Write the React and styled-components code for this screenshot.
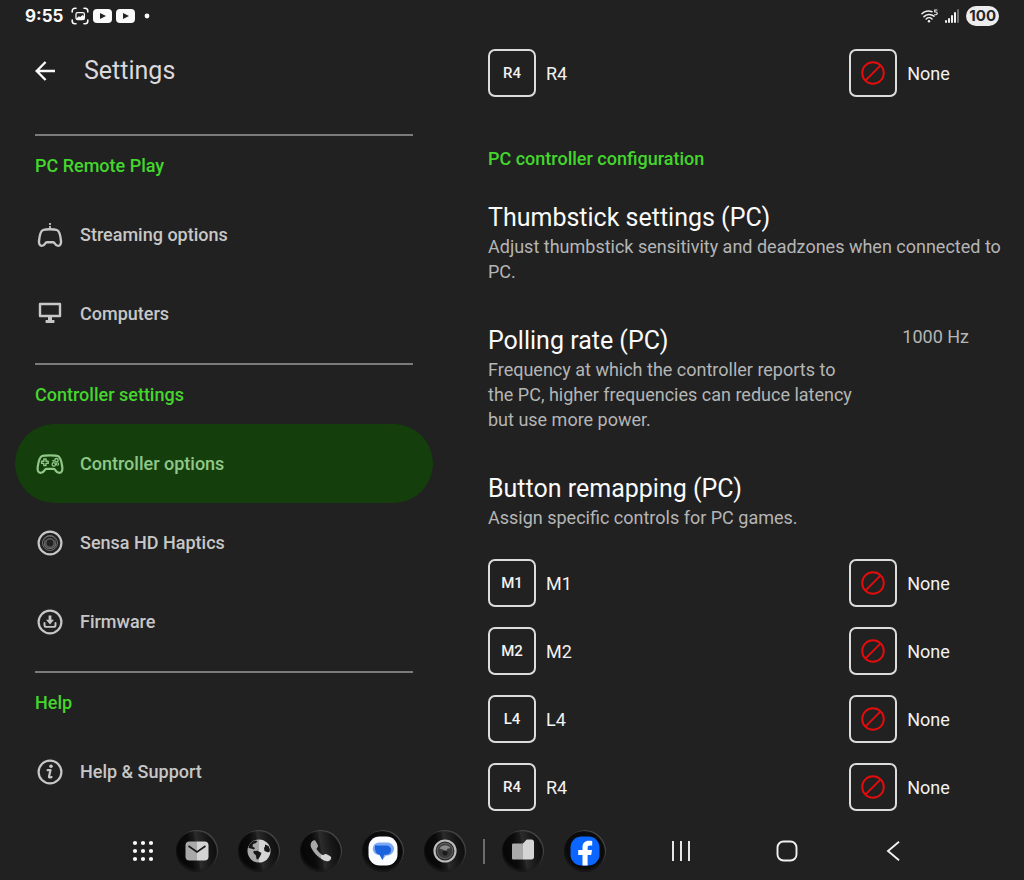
import React from 'react';
import styled, {createGlobalStyle} from 'styled-components';

const GlobalStyle = createGlobalStyle`
	*{
		box-sizing:border-box;
	}
	body{
		margin:0;
		background:#212121;
		color:#f2f2f2;
		font-family:Roboto, "Noto Sans", sans-serif;
	}
	h1, h2, h3, p, ul{
		margin:0;
		padding:0;
		font-weight:400;
	}
	ul{
		list-style:none;
	}
	button{
		padding:0;
		border:0;
		background:none;
		color:inherit;
		font:inherit;
		text-align:left;
		cursor:pointer;
	}
	a{
		color:inherit;
		text-decoration:none;
	}
	svg{
		display:block;
		flex:none;
	}
`;

//*** status bar ***//

const StatusWrapper = styled.header`
	display:flex;
	justify-content:space-between;
	align-items:center;
	height:31px;
	padding:0 25px;
	font-family:Inter, Roboto, sans-serif;
	color:#fafafa;
`;

const StatusGroup = styled.div`
	display:flex;
	align-items:center;
	gap:${props => props.$gap}px;
`;

const Clock = styled.time`
	margin-right:4px;
	font-size:17px;
	font-weight:700;
`;

const Battery = styled.span`
	height:20px;
	padding:0 3px;
	border-radius:10px;
	background:#ededed;
	color:#262626;
	font-size:15px;
	font-weight:700;
	line-height:20px;
`;

function VideoIcon() {
	return (
		<svg width="19" height="14" viewBox="0 0 19 14">
			<rect width="19" height="14" rx="4" fill="#fafafa" />
			<path d="M7 4v6l6-3z" fill="#212121" />
		</svg>
	);
}

function StatusBar() {
	return (
		<StatusWrapper>
			<StatusGroup $gap={4}>
				<Clock>9:55</Clock>
				<svg width="18" height="18" viewBox="0 0 18 18" fill="none" stroke="#fafafa" strokeWidth="1.6" strokeLinecap="round">
					<path d="M1.2 5V4a2.8 2.8 0 0 1 2.8-2.8h1M13 1.2h1A2.8 2.8 0 0 1 16.8 4v1M16.8 13v1a2.8 2.8 0 0 1-2.8 2.8h-1M5 16.8H4A2.8 2.8 0 0 1 1.2 14v-1" />
					<rect x="5" y="5.6" width="8.4" height="7" rx="1.6" strokeWidth="1.3" />
					<path d="M5.4 11.4l2.4-2.2 1.4.8 2.4-2 1.6 1.4v3H5.6z" fill="#fafafa" stroke="none" />
				</svg>
				<VideoIcon />
				<VideoIcon />
				<svg width="16" height="6" viewBox="0 0 16 6">
					<circle cx="8" cy="3" r="2.4" fill="#fafafa" />
				</svg>
			</StatusGroup>
			<StatusGroup $gap={7}>
				<svg width="17" height="14" viewBox="0 0 17 14" fill="none" stroke="#f0f0f0" strokeWidth="1.5" strokeLinecap="round">
					<path d="M1 4.8C3.2 2.4 7.4 1.2 11 2.8M3 7.6c2.6-2.6 7-2.8 10-.4M5.200 10c1.600-1.600 4.200-1.600 5.800 0" />
					<circle cx="8" cy="12.200" r="1.200" fill="#f0f0f0" stroke="none" />
					<path d="M16 1h-2.300v2h1.200a1.300 1.300 0 0 1 0 2.700h-1.400" strokeWidth="1.100" />
				</svg>
				<svg width="14" height="14" viewBox="0 0 14 14" fill="#f0f0f0">
					<rect x="0" y="11" width="2" height="3" rx="1" />
					<rect x="3" y="9" width="2" height="5" rx="1" />
					<rect x="6" y="6" width="2" height="8" rx="1" />
					<rect x="9" y="3" width="2" height="11" rx="1" />
					<rect x="12" y="0" width="2" height="14" rx="1" fill="#6d6d6d" />
				</svg>
				<Battery>100</Battery>
			</StatusGroup>
		</StatusWrapper>
	);
}

//*** side menu icons, all 30x30 ***//

function MenuIcon({children}) {
	return (
		<svg width="30" height="30" viewBox="0 0 30 30" fill="none" stroke="currentColor" strokeWidth="2.2" strokeLinecap="round" strokeLinejoin="round">
			{children}
		</svg>
	);
}

const menuIcons = {
	streaming: (
		<MenuIcon>
			<path d="M15 9.200c-3 0-5.400.2-6.900.8C5.600 11 4.400 16.500 4 21.200c-.2 2.600.7 4.700 2.900 4.700 1.600 0 2.400-.8 3.100-2.100.6-1.100 1.100-1.600 2-1.600h6c.9 0 1.400.5 2 1.600.7 1.300 1.500 2.100 3.100 2.100 2.200 0 3.100-2.100 2.900-4.700-.4-4.700-1.600-10.200-4.100-11.200-1.500-.6-3.900-.8-6.900-.8z" strokeWidth="2.400" />
			<rect x="14.100" y="3" width="1.800" height="2" fill="currentColor" stroke="none" />
			<rect x="14.100" y="6" width="1.800" height="2" fill="currentColor" stroke="none" />
		</MenuIcon>
	),
	computers: (
		<MenuIcon>
			<rect x="5" y="5" width="20" height="12" strokeWidth="2.4" />
			<path d="M13 17h4v4h2.400v3h-8.800v-3H13z" fill="currentColor" stroke="none" />
		</MenuIcon>
	),
	controller: (
		<MenuIcon>
			<path d="M15 6.400c-3.800 0-6.400.1-7.900.7C4.600 8.100 3.400 13 2.700 18c-.4 3.200.3 5.900 2.900 5.900 1.800 0 2.800-.8 3.700-2.300.7-1.200 1.300-1.700 2.300-1.700h6.800c1 0 1.600.5 2.300 1.700.9 1.500 1.900 2.300 3.700 2.300 2.600 0 3.300-2.700 2.900-5.900-.7-5-1.900-9.900-4.400-10.900-1.500-.6-4.100-.7-7.900-.7z" strokeWidth="2.200" />
			<path d="M8.800 10h2.200v2.200h2.200v2.200H11v2.200H8.800v-2.200H6.600v-2.200h2.200z" strokeWidth="1.400" />
			<circle cx="21.500" cy="11.200" r="1.700" strokeWidth="1.300" />
			<circle cx="18.800" cy="15.400" r="1.700" strokeWidth="1.300" />
			<circle cx="22.400" cy="15" r="1.200" strokeWidth="1.100" />
			<circle cx="18.200" cy="11.800" r=".6" strokeWidth="1" />
		</MenuIcon>
	),
	haptics: (
		<MenuIcon>
			<circle cx="15" cy="15" r="11.400" />
			<g stroke="#6f6f6f" strokeWidth="1">
				<circle cx="15" cy="15" r="7.500" />
				<circle cx="15" cy="15" r="4.200" stroke="#5f5f5f" strokeWidth="1.500" />
				<path d="M9.500 11c2-4 9-4 11 0M9 17c1.200 4.800 10.800 4.800 12 0M10 12.500c-1.500 3 0 6.500 3 8M20 12.500c1.500 3 0 6.500-3 8" />
			</g>
		</MenuIcon>
	),
	firmware: (
		<MenuIcon>
			<circle cx="15" cy="15" r="11.400" />
			<path d="M13.600 8.600h2.800v4.200h2.600L15 17.400l-4-4.600h2.600z" fill="currentColor" stroke="none" />
			<path d="M9.500 16v1.900c0 1.300.7 2 1.900 2h7.200c1.200 0 1.900-.7 1.900-2V16" strokeWidth="1.900" />
		</MenuIcon>
	),
	info: (
		<MenuIcon>
			<circle cx="15" cy="15" r="11.400" />
			<circle cx="16" cy="9.200" r="1.800" fill="currentColor" stroke="none" />
			<path d="M12.600 13.200h2.900l-1.500 6.400c-.1 1 .7 1.100 2.500.5" strokeWidth="2.200" />
		</MenuIcon>
	),
};

//*** side menu ***//

const Sidebar = styled.nav`
	padding:0 15px;
`;

const SidebarHeader = styled.div`
	display:flex;
	align-items:center;
	gap:29px;
	height:79px;
	margin-bottom:24px;
	padding:0 20px;
	h1{
		color:#dcd8dc;
		font-size:25px;
		line-height:32px;
	}
`;

const MenuGroup = styled.section`
	padding-bottom:10px;
	&::before{
		content:"";
		display:block;
		height:2px;
		margin:0 20px;
		background:#7b7b7b;
	}
`;

const SectionTitle = styled.h2`
	color:#44d62c;
	font-size:18px;
	font-weight:500;
	line-height:24px;
	${MenuGroup} &{
		padding:18px 20px 17px;
	}
`;

const MenuLink = styled.a`
	display:flex;
	align-items:center;
	gap:15px;
	height:79px;
	padding:0 20px;
	border-radius:40px;
	background:${props => (props.$active ? '#153e0d' : 'transparent')};
	color:${props => (props.$active ? '#90c987' : '#c7c7c7')};
	font-size:18px;
	font-weight:500;
`;

const menu = [
	{
		title: 'PC Remote Play',
		links: [
			{icon: 'streaming', label: 'Streaming options'},
			{icon: 'computers', label: 'Computers'},
		],
	},
	{
		title: 'Controller settings',
		links: [
			{icon: 'controller', label: 'Controller options', active: true},
			{icon: 'haptics', label: 'Sensa HD Haptics'},
			{icon: 'firmware', label: 'Firmware'},
		],
	},
	{
		title: 'Help',
		links: [{icon: 'info', label: 'Help & Support'}],
	},
];

function SideMenu() {
	return (
		<Sidebar>
			<SidebarHeader>
				<button type="button" aria-label="Back">
					<svg width="20" height="20" viewBox="0 0 20 20" fill="none" stroke="#fafafa" strokeWidth="2.400">
						<path d="M20 10H2M10.600 1L1.700 10l8.900 9" />
					</svg>
				</button>
				<h1>Settings</h1>
			</SidebarHeader>
			{menu.map(group => (
				<MenuGroup key={group.title}>
					<SectionTitle>{group.title}</SectionTitle>
					{group.links.map(link => (
						<MenuLink key={link.label} href="#" $active={link.active}>
							{menuIcons[link.icon]}
							{link.label}
						</MenuLink>
					))}
				</MenuGroup>
			))}
		</Sidebar>
	);
}

//*** options on the right ***//

const Options = styled.section`
	padding:18px 20px 8px 40px;
	> ${SectionTitle}{
		margin:50px 0 31px;
	}
`;

const Setting = styled.div`
	display:flex;
	justify-content:space-between;
	align-items:flex-start;
	margin-bottom:${props => (props.$last ? 29 : 41)}px;
`;

const SettingText = styled.div`
	max-width:${props => (props.$narrow ? '372px' : 'none')};
	h3{
		color:#fafafa;
		font-size:25px;
		line-height:32px;
	}
	p{
		color:#b5b5b5;
		font-size:18px;
		line-height:25px;
	}
`;

const ValueButton = styled.button`
	margin-right:35px;
	&&{
		color:#b5b5b5;
		font-size:18px;
		line-height:24px;
	}
	white-space:nowrap;
`;

const RemapList = styled.ul`
	display:grid;
	gap:20px;
`;

const RemapRow = styled.li`
	display:grid;
	grid-template-columns:7fr 3fr;
	font-size:18px;
`;

const RemapCell = styled.div`
	display:flex;
	align-items:center;
	gap:10px;
`;

const Key = styled.span`
	display:flex;
	justify-content:center;
	align-items:center;
	width:48px;
	height:48px;
	border:2px solid #dcdcdc;
	border-radius:7px;
	font-size:15px;
	font-weight:500;
`;

function Remap({keys}) {
	return (
		<RemapList>
			{keys.map(name => (
				<RemapRow key={name}>
					<RemapCell>
						<Key>{name}</Key>
						{name}
					</RemapCell>
					<RemapCell as="button" type="button">
						<Key>
							<svg width="24" height="24" viewBox="0 0 24 24" fill="none" stroke="#e60c0c" strokeWidth="1.900">
								<circle cx="12" cy="12" r="10.800" />
								<path d="M4.400 19.600L19.600 4.400" />
							</svg>
						</Key>
						None
					</RemapCell>
				</RemapRow>
			))}
		</RemapList>
	);
}

//*** dock with the app shortcuts and system keys ***//

const DockWrapper = styled.footer`
	display:flex;
	justify-content:space-between;
	align-items:center;
	height:60px;
	padding:0 111px 0 127px;
`;

const DockApps = styled.div`
	display:flex;
	align-items:center;
	gap:17px;
`;

const DockGroup = styled.div`
	display:flex;
	gap:${props => props.$gap}px;
`;

const DockButton = styled.button`
	display:grid;
	place-items:center;
	width:${props => props.$width}px;
	height:42px;
`;

const DockDivider = styled.span`
	width:2px;
	height:25px;
	background:#6c6c6c;
`;

const AppButton = styled.button`
	display:grid;
	place-items:center;
	width:42px;
	height:42px;
	border-radius:50%;
	&&{
		background:${props => (props.$plain ? '#0b0b0b' : 'linear-gradient(80deg, #050505 0%, #0b0b0b 35%, #1d1d1d 49%, #2c2c2c 52%, #161616 75%, #0a0a0a 100%)')};
	}
	box-shadow:inset -1px 1px 1px #4a4a4a, inset 0 -2px 3px #1c1c1c;
`;

function AppIcon({children}) {
	return (
		<svg width="42" height="42" viewBox="0 0 42 42">
			<defs>
				<linearGradient id="split">
					<stop offset="50%" stopColor="#a9a9a9" />
					<stop offset="50%" stopColor="#d4d4d4" />
				</linearGradient>
			</defs>
			{children}
		</svg>
	);
}

const apps = [
	{
		label: 'Mail',
		icon: (
			<AppIcon>
				<rect x="9.500" y="11.500" width="23" height="19" rx="4" fill="url(#split)" />
				<path d="M12.500 16l8.500 6 8.500-6" fill="none" stroke="#1a1a1a" strokeWidth="1.600" />
			</AppIcon>
		),
	},
	{
		label: 'Browser',
		icon: (
			<AppIcon>
				<circle cx="21" cy="21" r="11.500" fill="url(#split)" />
				<path d="M11 15.500c1-2 3-4 5.500-5l3 .5-1.500 2-3 1-.5 2.500 2.500 1.500-1 1.500-3-1-2.500-.5zM15.500 21l4-.3 4 2.300-1.500 3.500-2 3-1.500-.5-.5-3.500-2.500-2.500zM27 14.500l3.500 1.500 1.500 3.500-.5 2.500-2 .2-3-1.200-.5-3 1-1.500z" fill="#171717" />
			</AppIcon>
		),
	},
	{
		label: 'Phone',
		icon: (
			<AppIcon>
				<path d="M12.200 11.300c1.700-1.500 3-1.300 4 .6l1.600 3.200c.6 1.300-.1 2.300-.9 3-.5.600-.2 1.300.5 2.200 1.100 1.600 2.500 3 4.200 4.200.9.600 1.500.8 2.100.3.900-.8 1.800-1.200 3-.6l3.200 1.900c1.600 1 1.800 2.300.4 3.800-1.800 1.800-4.600 1.800-8-.3-4.500-2.700-8.300-6.500-10.700-11-1.500-2.900-1.300-5.700.6-7.300z" fill="url(#split)" />
			</AppIcon>
		),
	},
	{
		label: 'Messages',
		plain: true,
		icon: (
			<AppIcon>
				<rect x="6.500" y="6.500" width="29" height="29" rx="11" fill="#fafcff" />
				<path d="M17 12.500h8.500a6.500 6.500 0 0 1 0 13H24l-4 4.500-2-5h-1a6 6 0 0 1 0-12.500z" fill="#7ea8f5" />
				<path d="M13 15.500h11.500a4.600 4.600 0 0 1 0 9.200H22l-1.200 5.300-3.400-5.300c-3-.6-5-4-4.400-9.200z" fill="#1b63dc" />
			</AppIcon>
		),
	},
	{
		label: 'Camera',
		icon: (
			<AppIcon>
				<circle cx="21" cy="21" r="10.500" fill="#202020" stroke="#bcbcbc" strokeWidth="2.200" />
				<circle cx="21" cy="21" r="7.800" fill="#3b3b3b" stroke="#5a5a5a" strokeWidth="1.400" />
				<path d="M15.500 18.500c2.500-4 8-4.500 11-.5l-3.500 1-1 5-2-4z" fill="#8b8b8b" />
				<circle cx="21" cy="23" r="2.500" fill="#1b1b1b" />
			</AppIcon>
		),
	},
];

const recentApps = [
	{
		label: 'Files',
		icon: (
			<AppIcon>
				<path d="M11.500 13.500H20c1 0 1.500-.4 2.200-1.200l1.300-1.600c.6-.7 1.200-1.200 2.200-1.200h3.800c1.500 0 2.500 1 2.500 2.500v15c0 1.500-1 2.500-2.500 2.500h-18C10.500 29.500 10 29 10 28V15c0-1 .5-1.500 1.500-1.500z" fill="url(#split)" />
			</AppIcon>
		),
	},
	{
		label: 'Facebook',
		plain: true,
		icon: (
			<AppIcon>
				<rect x="6.500" y="6.500" width="29" height="29" rx="11" fill="#0a66ff" />
				<path d="M18.500 35.500V25h-4.300v-4.900h4.300v-2.600c0-4.600 2.400-6.700 6.400-6.700 1.400 0 2.500.1 3.300.3v4.500h-2.100c-1.800 0-2.500.8-2.500 2.300v2.200h4.400l-.8 4.900h-3.600v10.500z" fill="#fff" />
			</AppIcon>
		),
	},
];

function AppGroup({items}) {
	return (
		<DockGroup $gap={20}>
			{items.map(app => (
				<AppButton key={app.label} type="button" aria-label={app.label} $plain={app.plain}>
					{app.icon}
				</AppButton>
			))}
		</DockGroup>
	);
}

function Dock() {
	return (
		<DockWrapper>
			<DockApps>
				<DockButton type="button" aria-label="All apps" $width={32}>
					<svg width="22" height="22" viewBox="0 0 22 22" fill="#fafafa">
						{[3, 11, 19].map(y => [3, 11, 19].map(x => <circle key={`${x}-${y}`} cx={x} cy={y} r="2.100" />))}
					</svg>
				</DockButton>
				<AppGroup items={apps} />
				<DockDivider />
				<AppGroup items={recentApps} />
			</DockApps>
			<DockGroup $gap={66}>
				<DockButton type="button" aria-label="Recents" $width={40}>
					<svg width="20" height="20" viewBox="0 0 20 20" stroke="#f0f0f0" strokeWidth="1.900">
						<path d="M2 0v20M10 0v20M18 0v20" />
					</svg>
				</DockButton>
				<DockButton type="button" aria-label="Home" $width={40}>
					<svg width="22" height="22" viewBox="0 0 22 22" fill="none" stroke="#f0f0f0" strokeWidth="1.900">
						<rect x="1.500" y="1.500" width="19" height="19" rx="6" />
					</svg>
				</DockButton>
				<DockButton type="button" aria-label="Previous screen" $width={40}>
					<svg width="14" height="20" viewBox="0 0 14 20" fill="none" stroke="#f0f0f0" strokeWidth="1.900">
						<path d="M13 .8L2 10l11 9.200" />
					</svg>
				</DockButton>
			</DockGroup>
		</DockWrapper>
	);
}

const Page = styled.div`
	display:flex;
	flex-direction:column;
	min-height:100vh;
`;

//7/16 for the menu and the rest for the options.
const Content = styled.main`
	display:grid;
	grid-template-columns:7fr 9fr;
	flex:1;
`;

export default function App() {
	return (
		<Page>
			<GlobalStyle />
			<StatusBar />
			<Content>
				<SideMenu />
				<Options>
					<Remap keys={['R4']} />
					<SectionTitle>PC controller configuration</SectionTitle>
					<Setting>
						<SettingText>
							<h3>Thumbstick settings (PC)</h3>
							<p>Adjust thumbstick sensitivity and deadzones when connected to PC.</p>
						</SettingText>
					</Setting>
					<Setting>
						<SettingText $narrow>
							<h3>Polling rate (PC)</h3>
							<p>Frequency at which the controller reports to the PC, higher frequencies can reduce latency but use more power.</p>
						</SettingText>
						<ValueButton type="button">1000 Hz</ValueButton>
					</Setting>
					<Setting $last>
						<SettingText>
							<h3>Button remapping (PC)</h3>
							<p>Assign specific controls for PC games.</p>
						</SettingText>
					</Setting>
					<Remap keys={['M1', 'M2', 'L4', 'R4']} />
				</Options>
			</Content>
			<Dock />
		</Page>
	);
}
